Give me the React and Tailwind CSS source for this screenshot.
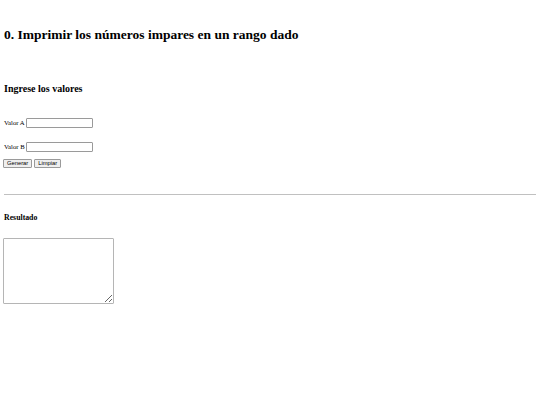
import React from 'react'

function Campo({ label }) {
	return (
		<div className="flex items-center h-[10px]">
			<label className="text-[6.7px] leading-[10px] mr-[1px]">{label}</label>
			<input
				type="text"
				className="w-[67px] h-[10px] border border-[#9a9a9a] rounded-[1px] bg-white outline-none"
			/>
		</div>
	)
}

function App() {
	return (
		<div className="min-h-screen bg-white text-black px-[4px] flex flex-col font-['Liberation_Serif',serif]">
			<h1 className="mt-[27px] text-[13.5px] leading-[16px] font-bold">
				0. Imprimir los números impares en un rango dado
			</h1>

			<h2 className="mt-[40px] text-[10px] leading-[11px] font-bold">Ingrese los valores</h2>

			<div className="mt-[24px]">
				<Campo label="Valor A" />
			</div>
			<div className="mt-[14px]">
				<Campo label="Valor B" />
			</div>

			<div className="mt-[7px] -ml-[1px] flex gap-[2px]">
				<button className="h-[9px] px-[3px] text-[5.8px] leading-[7px] bg-[#efefef] border border-[#9a9a9a] rounded-[1px] font-['Liberation_Sans',sans-serif]">
					Generar
				</button>
				<button className="h-[9px] px-[3px] text-[5.8px] leading-[7px] bg-[#efefef] border border-[#9a9a9a] rounded-[1px] font-['Liberation_Sans',sans-serif]">
					Limpiar
				</button>
			</div>

			<hr className="mt-[26px] border-0 h-px bg-[#c0c0c0]" />

			<h4 className="mt-[18px] text-[7.8px] leading-[10px] font-bold">Resultado</h4>

			<textarea className="mt-[15px] -ml-[1px] w-[111px] h-[66px] border border-[#b5b5b5] rounded-[1px] bg-white outline-none"></textarea>
		</div>
	)
}

export default App
